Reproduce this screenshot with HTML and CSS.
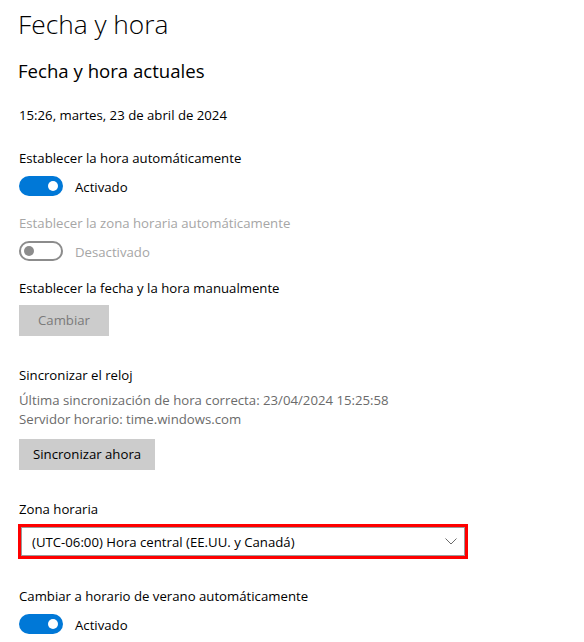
FILE: index.html
```html
<!DOCTYPE html>
<html lang="es">
<head>
<meta charset="utf-8">
<title>Fecha y hora</title>
<link rel="stylesheet" href="styles.css">
</head>
<body>
<main class="page">
  <h1 class="title">Fecha y hora</h1>
  <h2 class="subtitle">Fecha y hora actuales</h2>
  <p class="text date">15:26, martes, 23 de abril de 2024</p>

  <p class="text label">Establecer la hora automáticamente</p>
  <div class="toggle-row">
    <span class="toggle on"><span class="knob"></span></span>
    <span class="toggle-text">Activado</span>
  </div>

  <p class="text label disabled">Establecer la zona horaria automáticamente</p>
  <div class="toggle-row">
    <span class="toggle off"><span class="knob"></span></span>
    <span class="toggle-text disabled">Desactivado</span>
  </div>

  <p class="text label">Establecer la fecha y la hora manualmente</p>
  <button class="btn btn-disabled" type="button">Cambiar</button>

  <p class="text label section">Sincronizar el reloj</p>
  <div class="info">
    <p class="text secondary">Última sincronización de hora correcta: 23/04/2024 15:25:58</p>
    <p class="text secondary">Servidor horario: time.windows.com</p>
  </div>
  <button class="btn" type="button">Sincronizar ahora</button>

  <p class="text label section">Zona horaria</p>
  <div class="select">
    <div class="select-inner">
      <span class="select-text">(UTC-06:00) Hora central (EE.UU. y Canadá)</span>
      <svg class="chevron" width="12" height="7" viewBox="0 0 12 7"><polyline points="0.5,0.5 6,6 11.5,0.5" fill="none" stroke="#6b6b6b" stroke-width="1"/></svg>
    </div>
  </div>

  <p class="text label section-lg">Cambiar a horario de verano automáticamente</p>
  <div class="toggle-row">
    <span class="toggle on"><span class="knob"></span></span>
    <span class="toggle-text">Activado</span>
  </div>
</main>
</body>
</html>
```
FILE: styles.css
```css
* { box-sizing: border-box; }
html, body { margin: 0; padding: 0; background: #ffffff; }
body {
  font-family: "Segoe UI", "Open Sans", "Noto Sans", sans-serif;
  color: #000000;
  font-size: 13.2px;
}
.page {
  padding: 0 0 0 19px;
  overflow: hidden;
  height: 642px;
}
.title {
  margin: 6px 0 0 -1px;
  font-size: 26.3px;
  font-weight: 300;
  line-height: 36px;
}
.subtitle {
  margin: 15px 0 0 -1px;
  font-size: 18.6px;
  font-weight: 400;
  line-height: 28px;
}
.text {
  margin: 0;
  line-height: 20px;
  font-size: 13.2px;
}
.date { margin-top: 20px; }
.label { margin-top: 23px; }
.toggle-row + .label { margin-top: 17px; }
.btn + .label.section { margin-top: 29px; }
.label.section-lg { margin-top: 27px; }
.disabled { color: #a6a6a6; }
.secondary { color: #6b6b6b; line-height: 19px; }
.info { margin-top: 6px; }

.toggle-row {
  display: flex;
  align-items: center;
  gap: 12px;
  margin-top: 8px;
  height: 20px;
}
.toggle {
  width: 44px;
  height: 20px;
  border-radius: 10px;
  display: flex;
  align-items: center;
  padding: 0 5px;
}
.toggle .knob {
  width: 10px;
  height: 10px;
  border-radius: 50%;
}
.toggle.on { background: #0078d7; justify-content: flex-end; }
.toggle.on .knob { background: #ffffff; }
.toggle.off { border: 2px solid #8c8c8c; justify-content: flex-start; padding: 0 3px; }
.toggle.off .knob { background: #8c8c8c; }
.toggle-text { font-size: 13.2px; line-height: 20px; padding-top: 1px; }

.btn {
  display: block;
  margin-top: 7px;
  height: 31px;
  padding: 0 14px;
  border: none;
  background: #cccccc;
  font-family: inherit;
  font-size: 13.2px;
  color: #000000;
  line-height: 31px;
}
.btn-disabled { color: #7a7a7a; width: 90px; padding: 0; text-align: center; }
.info + .btn { margin-top: 10px; }

.select {
  margin: 5px 0 0 -1px;
  width: 450px;
  height: 35px;
  border: 3px solid #ff0000;
}
.select-inner {
  height: 29px;
  border: 1px solid #9a9a9a;
  display: flex;
  align-items: center;
  justify-content: space-between;
  padding: 0 7px 0 10px;
}
.select-text { font-size: 13.2px; line-height: 20px; }
.chevron { display: block; }
```
